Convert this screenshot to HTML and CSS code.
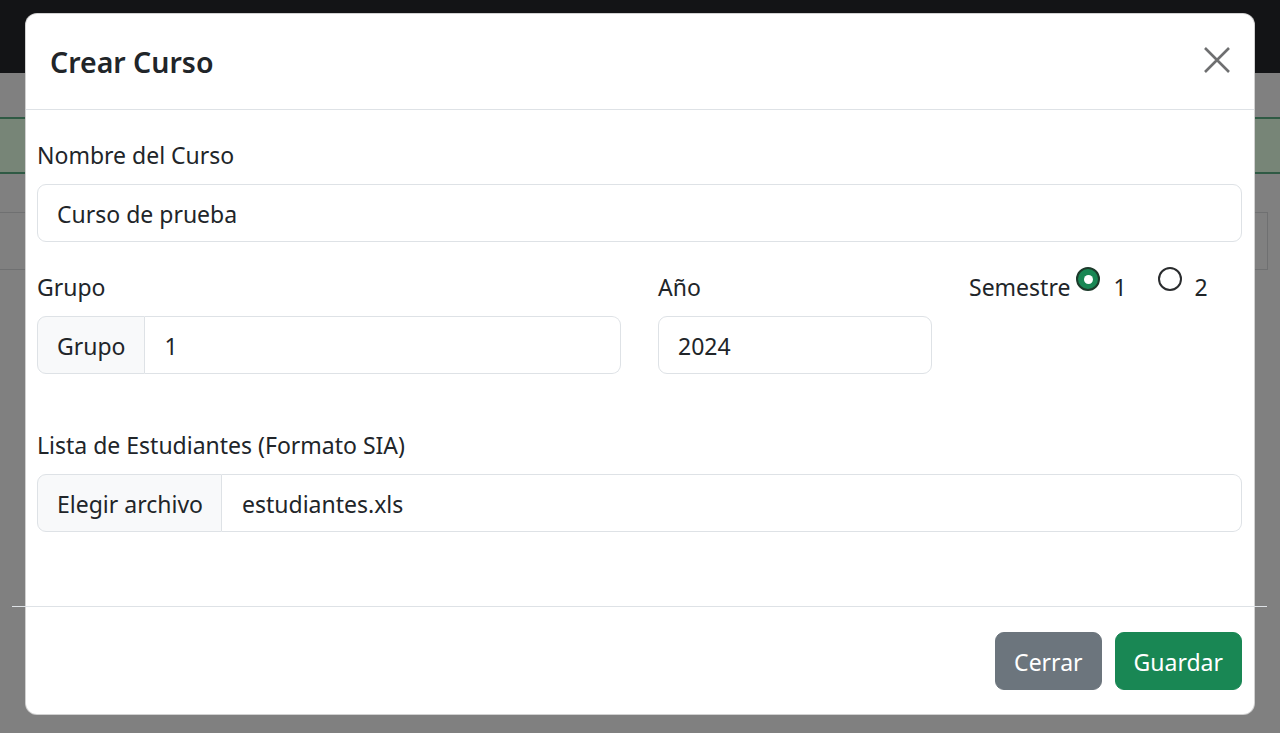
FILE: index.html
```html
<!DOCTYPE html>
<html lang="es">
<head>
<meta charset="utf-8">
<title>Crear Curso</title>
<link rel="stylesheet" href="styles.css">
</head>
<body>
<div class="page">
  <div class="navbar"></div>
  <div class="page-content">
    <div class="alert"></div>
    <div class="search"></div>
  </div>
</div>

<div class="modal">
  <div class="modal-header">
    <h5 class="modal-title">Crear Curso</h5>
    <button class="btn-close" type="button" aria-label="Cerrar">
      <svg width="26" height="26" viewBox="0 0 26 26"><path d="M1 1 L25 25 M25 1 L1 25" stroke="#6e6f70" stroke-width="2.6" stroke-linecap="butt"/></svg>
    </button>
  </div>
  <div class="modal-body">
    <div class="field field-first">
      <label class="form-label">Nombre del Curso</label>
      <div class="form-control">Curso de prueba</div>
    </div>
    <div class="row">
      <div class="field">
        <label class="form-label">Grupo</label>
        <div class="input-group">
          <span class="addon">Grupo</span>
          <div class="form-control joined">1</div>
        </div>
      </div>
      <div class="field">
        <label class="form-label">Año</label>
        <div class="form-control">2024</div>
      </div>
      <div class="semestre">
        <span class="sem-label">Semestre</span>
        <span class="radio checked"></span><span class="radio-text">1</span>
        <span class="radio second"></span><span class="radio-text">2</span>
      </div>
    </div>
    <div class="field field-file">
      <label class="form-label">Lista de Estudiantes (Formato SIA)</label>
      <div class="input-group">
        <span class="addon file-btn">Elegir archivo</span>
        <div class="form-control joined">estudiantes.xls</div>
      </div>
    </div>
  </div>
  <div class="divider"></div>
  <div class="modal-footer">
    <button class="btn btn-secondary" type="button">Cerrar</button>
    <button class="btn btn-success" type="button">Guardar</button>
  </div>
</div>
</body>
</html>
```

FILE: styles.css
```css
* { box-sizing: border-box; }

html, body {
  margin: 0;
  height: 100%;
}

body {
  background: #808080;
  font-family: "Noto Sans", "Open Sans", sans-serif;
  color: #212529;
  overflow: hidden;
}

.page {
  display: flex;
  flex-direction: column;
}

.navbar {
  height: 73px;
  background: #131416;
}

.page-content {
  padding-top: 44px;
  display: flex;
  flex-direction: column;
}

.alert {
  height: 57px;
  background: #778577;
  border-top: 2px solid #2f5a44;
  border-bottom: 2px solid #2f5a44;
}

.search {
  margin-top: 38px;
  width: 1268px;
  height: 58px;
  border: 1px solid #6f7071;
  border-left: none;
}

/* ---- modal ---- */
.modal {
  position: absolute;
  left: 25px;
  top: 13px;
  width: 1230px;
  background: #fff;
  border: 1px solid rgba(0, 0, 0, 0.18);
  border-radius: 12px;
  display: flex;
  flex-direction: column;
}

.modal-header {
  height: 96px;
  padding: 0 24px 0 24px;
  display: flex;
  align-items: center;
  justify-content: space-between;
  border-bottom: 1px solid #dee2e6;
}

.modal-title {
  margin: 0;
  padding-top: 2px;
  font-size: 28.5px;
  font-weight: 600;
  line-height: 1;
  color: #212529;
}

.btn-close {
  border: 0;
  background: none;
  padding: 0;
  width: 26px;
  height: 26px;
  margin-top: -3px;
  cursor: pointer;
}

.btn-close svg { display: block; }

.modal-body {
  padding: 26px 12px 0 11px;
  display: flex;
  flex-direction: column;
}

.field {
  display: flex;
  flex-direction: column;
}

.form-label {
  font-size: 23px;
  line-height: 36px;
  padding-top: 1px;
  height: 36px;
  margin-bottom: 12px;
}

.form-control {
  height: 58px;
  border: 1px solid #dee2e6;
  border-radius: 9px;
  padding: 2px 19px 0;
  display: flex;
  align-items: center;
  font-size: 23px;
  color: #212529;
  background: #fff;
}

.row {
  margin-top: 26px;
  display: grid;
  grid-template-columns: 584px 274px 1fr;
  column-gap: 37px;
}

.input-group {
  display: flex;
  height: 58px;
}

.addon {
  display: flex;
  align-items: center;
  padding: 2px 18px 0 19px;
  font-size: 23px;
  background: #f8f9fa;
  border: 1px solid #dee2e6;
  border-radius: 9px 0 0 9px;
  white-space: nowrap;
}

.form-control.joined {
  flex: 1;
  height: 58px;
  border-left: none;
  border-radius: 0 9px 9px 0;
  padding-left: 20px;
}

.field-file { margin-top: 52px; }

.semestre {
  display: flex;
  align-items: flex-start;
  padding-top: 1px;
}

.sem-label {
  font-size: 23px;
  line-height: 36px;
}

.radio {
  width: 24px;
  height: 24px;
  border-radius: 50%;
  border: 2px solid #2a2c2e;
  background: #fff;
  margin-top: -2px;
  margin-left: 6px;
  position: relative;
  flex: none;
}

.radio.checked {
  background: #198754;
  border-color: #1d3a2b;
}

.radio.checked::after {
  content: "";
  position: absolute;
  left: 50%;
  top: 50%;
  width: 9px;
  height: 9px;
  margin: -4.5px 0 0 -4.5px;
  border-radius: 50%;
  background: #fff;
}

.radio.second { margin-left: 31px; }

.radio-text {
  font-size: 23px;
  line-height: 36px;
  margin-left: 13px;
}

.divider {
  margin: 74px -13px 0 -14px;
  height: 1px;
  background: #dee2e6;
}

.modal-footer {
  padding: 25px 12px 24px 12px;
  display: flex;
  justify-content: flex-end;
  gap: 13px;
}

.btn {
  height: 58px;
  border: 1px solid transparent;
  border-radius: 9px;
  padding: 2px 18px 0;
  font-family: inherit;
  font-size: 23px;
  color: #fff;
  cursor: pointer;
}

.btn-secondary { background: #6c757d; border-color: #6c757d; }
.btn-success { background: #198754; border-color: #198754; }
```
